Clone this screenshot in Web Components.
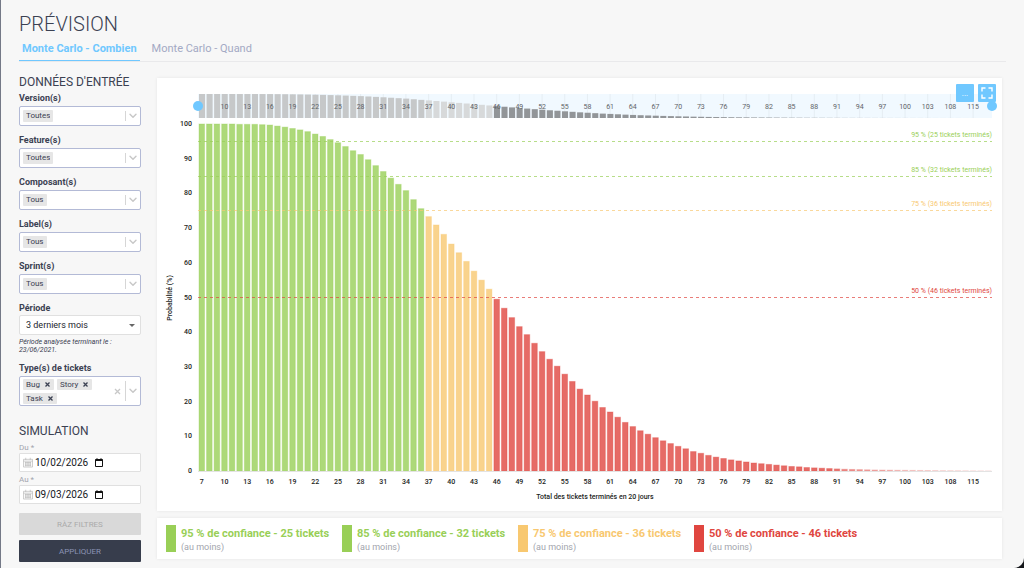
<!DOCTYPE html>
<html lang="fr">
<head>
<meta charset="utf-8">
<meta name="viewport" content="width=device-width, initial-scale=1">
<title>Prévision</title>
<style>
    :root {
        --ink: #3b4152;
        --muted: #a2a5ad;
        --lavender: #b3bad6;
        --blue: #70c8ff;
        --green: #99cf57;
        --orange: #f8c870;
        --red: #e04640;
    }

    body {
        margin: 0;
        background: #15171b;
        color: var(--ink);
        font-family: Roboto, "Liberation Sans", sans-serif;
        font-size: 8px;
    }
</style>
</head>
<body>
<forecast-page>
    <page-tabs slot="tabs"></page-tabs>

    <filter-group slot="filters" heading="DONNÉES D'ENTRÉE">
        <filter-select label="Version(s)" value="Toutes"></filter-select>
        <filter-select label="Feature(s)" value="Toutes"></filter-select>
        <filter-select label="Composant(s)" value="Tous"></filter-select>
        <filter-select label="Label(s)" value="Tous"></filter-select>
        <filter-select label="Sprint(s)" value="Tous"></filter-select>
        <period-select label="Période" value="3 derniers mois">Période analysée terminant le : 23/06/2021.</period-select>
        <chip-select label="Type(s) de tickets" values="Bug,Story,Task"></chip-select>
    </filter-group>
    <filter-group slot="filters" heading="SIMULATION">
        <date-field label="Du *" value="10/02/2026"></date-field>
        <date-field label="Au *" value="09/03/2026"></date-field>
    </filter-group>
    <form-actions slot="filters"></form-actions>

    <monte-carlo-chart></monte-carlo-chart>
    <confidence-legend>
        <confidence-item style="--tone: var(--green)" percent="95" tickets="25"></confidence-item>
        <confidence-item style="--tone: var(--green)" percent="85" tickets="32"></confidence-item>
        <confidence-item style="--tone: var(--orange)" percent="75" tickets="36"></confidence-item>
        <confidence-item style="--tone: var(--red)" percent="50" tickets="46"></confidence-item>
    </confidence-legend>
</forecast-page>

<script>
const BASE = `
    * { box-sizing: border-box; }
    button, input, select { font-family: inherit; color: inherit; margin: 0; }
    svg { display: block; }
`;

const FIELD = `
    :host { display: block; margin-bottom: 7px; }
    label {
        display: block;
        font-size: 9px;
        font-weight: 700;
        line-height: 14px;
        margin-bottom: 1px;
    }
    .box {
        display: flex;
        align-items: center;
        min-height: 20px;
        padding: 0 3px;
        background: #fff;
        border: 1px solid var(--lavender);
        border-radius: 2px;
    }
    .chevron {
        display: flex;
        align-items: center;
        align-self: stretch;
        margin: 4px 0;
        padding-left: 3px;
        border-left: 1px solid #d6d6d6;
    }
`;

const CHEVRON = `<span class="chevron"><svg width="8" height="6" viewBox="0 0 8 6" fill="none" stroke="#c8c8c8" stroke-width="1.4" stroke-linecap="round" stroke-linejoin="round"><path d="M1 1.2 4 4.3 7 1.2"/></svg></span>`;

class ForecastPage extends HTMLElement {
    connectedCallback() {
        this.attachShadow({ mode: 'open' }).innerHTML = `
            <style>
                ${BASE}
                :host {
                    display: block;
                    min-height: 100vh;
                    box-sizing: border-box;
                    padding: 11px 18px 6px;
                    background: #f7f7f7;
                    border-left: 1px solid #747987;
                    border-radius: 0 0 10px 0;
                }
                h1 {
                    margin: 0;
                    font-size: 20px;
                    font-weight: 300;
                    line-height: 26px;
                }
                .layout {
                    display: grid;
                    grid-template-columns: 122px minmax(0, 1fr);
                    gap: 16px;
                    padding-right: 4px;
                }
                aside { padding-top: 12px; }
                main {
                    display: flex;
                    flex-direction: column;
                    gap: 7px;
                    padding-top: 16px;
                }
            </style>
            <header>
                <h1>PRÉVISION</h1>
                <slot name="tabs"></slot>
            </header>
            <div class="layout">
                <aside><slot name="filters"></slot></aside>
                <main><slot></slot></main>
            </div>
        `;
    }
}

class PageTabs extends HTMLElement {
    connectedCallback() {
        this.attachShadow({ mode: 'open' }).innerHTML = `
            <style>
                ${BASE}
                :host { display: block; }
                nav {
                    display: flex;
                    gap: 9px;
                    border-bottom: 1px solid #e9e9eb;
                }
                a {
                    padding: 0 3px;
                    font-size: 11px;
                    line-height: 23px;
                    color: #a3a9c4;
                    text-decoration: none;
                    border-bottom: 1px solid transparent;
                }
                a[aria-current] {
                    color: var(--blue);
                    font-weight: 700;
                    border-color: var(--blue);
                }
            </style>
            <nav>
                <a href="#combien" aria-current="page">Monte Carlo - Combien</a>
                <a href="#quand">Monte Carlo - Quand</a>
            </nav>
        `;
    }
}

class FilterGroup extends HTMLElement {
    connectedCallback() {
        this.attachShadow({ mode: 'open' }).innerHTML = `
            <style>
                :host { display: block; }
                :host(:not(:first-of-type)) { margin-top: 17px; }
                h2 {
                    margin: 0;
                    font-size: 12px;
                    font-weight: 400;
                    line-height: 17px;
                }
            </style>
            <h2>${this.getAttribute('heading')}</h2>
            <slot></slot>
        `;
    }
}

class FilterSelect extends HTMLElement {
    connectedCallback() {
        this.attachShadow({ mode: 'open' }).innerHTML = `
            <style>
                ${BASE}
                ${FIELD}
                select {
                    appearance: none;
                    field-sizing: content;
                    height: 12px;
                    margin-right: auto;
                    padding: 0 3px;
                    background: #e6e6e6;
                    border: 0;
                    border-radius: 1px;
                    font-size: 8px;
                    line-height: 12px;
                }
            </style>
            <label for="control">${this.getAttribute('label')}</label>
            <div class="box">
                <select id="control"><option>${this.getAttribute('value')}</option></select>
                ${CHEVRON}
            </div>
        `;
    }
}

class PeriodSelect extends HTMLElement {
    connectedCallback() {
        this.attachShadow({ mode: 'open' }).innerHTML = `
            <style>
                ${BASE}
                ${FIELD}
                label { margin-bottom: 0; }
                .box {
                    padding: 0 5px 0 6px;
                    border-color: #e0e0e0;
                }
                select {
                    appearance: none;
                    flex: 1;
                    min-width: 0;
                    padding: 0;
                    background: none;
                    border: 0;
                    font-size: 9px;
                    color: #22252d;
                }
                p {
                    margin: 3px 20px 0 0;
                    font-size: 7px;
                    font-style: italic;
                    line-height: 8px;
                }
            </style>
            <label for="control">${this.getAttribute('label')}</label>
            <div class="box">
                <select id="control" aria-describedby="hint"><option>${this.getAttribute('value')}</option></select>
                <svg width="6" height="3" viewBox="0 0 6 3"><path d="M0 0h6L3 3z" fill="#666"/></svg>
            </div>
            <p id="hint"><slot></slot></p>
        `;
    }
}

class ChipSelect extends HTMLElement {
    connectedCallback() {
        const chips = this.getAttribute('values').split(',').map((value) => `
            <span class="chip">${value}<button type="button" aria-label="Retirer ${value}">
                <svg width="5" height="5" viewBox="0 0 5 5" stroke="currentColor" stroke-width="1.3"><path d="M.5.5l4 4M4.5.5l-4 4"/></svg>
            </button></span>
        `).join('');

        this.attachShadow({ mode: 'open' }).innerHTML = `
            <style>
                ${BASE}
                ${FIELD}
                .chips {
                    display: flex;
                    flex: 1;
                    flex-wrap: wrap;
                    gap: 3px;
                    padding: 2px 0 1px;
                }
                .chip {
                    display: flex;
                    align-items: center;
                    gap: 5px;
                    height: 11px;
                    padding: 0 4px 0 3px;
                    background: #e6e6e6;
                    border-radius: 1px;
                    font-size: 8px;
                }
                button {
                    padding: 0;
                    background: none;
                    border: 0;
                }
                input {
                    width: 12px;
                    height: 11px;
                    padding: 0;
                    border: 0;
                    outline: 0;
                }
                .clear { margin: 0 4px; color: #c8c8c8; }
            </style>
            <label for="control">${this.getAttribute('label')}</label>
            <div class="box">
                <div class="chips">${chips}<input id="control" type="text"></div>
                <button class="clear" type="button" aria-label="Tout effacer">
                    <svg width="7" height="7" viewBox="0 0 7 7" stroke="currentColor" stroke-width="1.3"><path d="M1 1l5 5M6 1 1 6"/></svg>
                </button>
                ${CHEVRON}
            </div>
        `;
        this.shadowRoot.querySelectorAll('.chip button').forEach((button) => {
            button.addEventListener('click', () => button.parentElement.remove());
        });
    }
}

class DateField extends HTMLElement {
    connectedCallback() {
        this.attachShadow({ mode: 'open' }).innerHTML = `
            <style>
                ${BASE}
                :host { display: block; margin-bottom: 3px; }
                :host(:first-of-type) { margin-top: 3px; }
                label {
                    display: block;
                    font-size: 8px;
                    line-height: 10px;
                    color: var(--muted);
                }
                .box {
                    display: flex;
                    align-items: center;
                    gap: 2px;
                    height: 19px;
                    padding: 0 3px;
                    background: #fff;
                    border: 1px solid #e0e0e0;
                    border-radius: 1px;
                }
                input {
                    width: 58px;
                    padding: 0;
                    border: 0;
                    background: none;
                    font-size: 10px;
                    color: #16181d;
                }
                button {
                    padding: 0;
                    background: none;
                    border: 0;
                    color: #111;
                }
            </style>
            <label for="control">${this.getAttribute('label')}</label>
            <div class="box">
                <svg width="10" height="11" viewBox="0 0 11 11" fill="none" stroke="#bcbcbc" stroke-width=".8">
                    <path d="M.5 2h10v8.5H.5zM.5 4h10M3 .3v2.4M8 .3v2.4M2 5.5h7M2 7.2h7M2 9h7M3 4.7v5M5.5 4.7v5M8 4.7v5"/>
                </svg>
                <input id="control" type="text" inputmode="numeric" value="${this.getAttribute('value')}">
                <button type="button" aria-label="Ouvrir le calendrier">
                    <svg width="8" height="9" viewBox="0 0 8 9" fill="none" stroke="currentColor"><path d="M.5 1.5h7v7h-7zM2 .2v1.5M6 .2v1.5"/><path d="M.5 2.2h7" stroke-width="1.6"/></svg>
                </button>
            </div>
        `;
    }
}

class FormActions extends HTMLElement {
    connectedCallback() {
        this.attachShadow({ mode: 'open' }).innerHTML = `
            <style>
                ${BASE}
                :host {
                    display: grid;
                    gap: 5px;
                    margin-top: 9px;
                }
                button {
                    height: 22px;
                    padding: 0;
                    border: 0;
                    border-radius: 1px;
                    font-size: 8px;
                }
                .reset { background: #d9d9d9; color: #aaa; }
                .apply { background: #373d4c; color: #8b93b4; }
            </style>
            <button class="reset" type="reset">RÀZ FILTRES</button>
            <button class="apply" type="submit">APPLIQUER</button>
        `;
    }
}

// Probability (%) of finishing at least N tickets, one value per column
const PROBABILITIES = [
    100, 100, 100, 100, 100, 99.9, 99.9, 99.9, 99.8, 99.7,
    99.4, 99.1, 98.7, 98.3, 97.8, 97.1, 96.4, 95.5, 94.6, 93.5,
    92.3, 91.2, 89.7, 88, 86.3, 84.4, 82.6, 80.8, 78.2, 75.6,
    73.3, 70.9, 68.2, 65.4, 62.9, 60.4, 57.6, 55, 52.4, 49.5,
    46.9, 44.2, 41.6, 39.3, 36.8, 34.4, 32.2, 30.2, 27.9, 25.8,
    23.6, 21.9, 20.1, 18.3, 17, 15.5, 14, 12.8, 11.6, 10.6,
    9.6, 8.7, 7.9, 7.1, 6.4, 5.6, 5.1, 4.5, 4, 3.6,
    3.2, 2.9, 2.6, 2.3, 2.1, 1.9, 1.7, 1.5, 1.3, 1.2,
    1, .9, .8, .7, .6, .5, .45, .4, .35, .3,
    .28, .25, .22, .2, .18, .16, .14, .12, .1, .09,
    .08, .06, .05, .04, .03
];

// The axis skips the totals that no simulation reached after 103
const LABELS = [];
for (let i = 0; i <= 96; i += 3) LABELS.push([i, i + 7]);
LABELS.push([99, 108], [102, 115]);

const THRESHOLDS = [
    [95, 25, 'var(--green)'],
    [85, 32, 'var(--green)'],
    [75, 36, 'var(--orange)'],
    [50, 46, 'var(--red)']
];

class MonteCarloChart extends HTMLElement {
    connectedCallback() {
        this.attachShadow({ mode: 'open' });
        this.render();
    }

    render() {
        const left = 41, right = 835, top = 46, bottom = 393;
        const step = (right - left) / PROBABILITIES.length;
        const x = (i) => left + step * i;
        const y = (p) => bottom - (bottom - top) * p / 100;
        const tone = (i, tones) => tones[i < 30 ? 0 : i < 39 ? 1 : 2];

        const columns = PROBABILITIES.map((p, i) => {
            const color = tone(i, ['var(--green)', 'var(--orange)', 'var(--red)']);
            // columns under 1 % fade out towards the axis
            const fade = Math.min(1, 0.3 + p);
            return `<rect x="${x(i) + 1}" y="${y(p)}" width="${step - 2}" height="${bottom - y(p)}" opacity="${fade}" style="fill:${color};stroke:${color}"/>`;
        }).join('');

        const overview = PROBABILITIES.map((p, i) => {
            const h = 24 * p / 100;
            return `<rect x="${x(i) + 1}" y="${40 - h}" width="${step - 1.5}" height="${h}" fill="${tone(i, ['#c6c8c9', '#d7d9da', '#929598'])}"/>`;
        }).join('');

        const centered = ([i, text], at) => `<text x="${x(i) + step / 2}" y="${at}" text-anchor="middle">${text}</text>`;

        const thresholds = THRESHOLDS.map(([p, tickets, color]) => `
            <path d="M${left} ${Math.floor(y(p)) + .5}H${right}" style="stroke:${color}"/>
            <text x="${right}" y="${Math.floor(y(p)) - 4}" text-anchor="end" style="fill:${color}">${p} % (${tickets} tickets terminés)</text>
        `).join('');

        let scale = '';
        for (let p = 0; p <= 100; p += 10) {
            scale += `<text x="35" y="${Math.round(y(p)) + 2}" text-anchor="end">${p}</text>`;
        }

        this.shadowRoot.innerHTML = `
            <style>
                ${BASE}
                :host {
                    display: block;
                    position: relative;
                    background: #fff;
                    box-shadow: 0 0 3px rgba(0, 0, 0, 0.08);
                }
                svg { width: 100%; height: auto; }
                text { font-size: 7px; }
                .columns { fill-opacity: 0.8; stroke-opacity: 0.35; }
                .thresholds path {
                    stroke-width: 1;
                    stroke-dasharray: 3 3;
                    stroke-opacity: 0.7;
                }
                .axis { fill: #1c1e22; font-weight: 500; }
                .overview text { fill: #5f6468; }
                .tools {
                    position: absolute;
                    top: 6px;
                    right: 6px;
                    display: flex;
                    gap: 4px;
                }
                .tools button {
                    display: grid;
                    place-items: center;
                    width: 18px;
                    height: 18px;
                    padding: 0;
                    background: var(--blue);
                    border: 0;
                    border-radius: 1px;
                    color: #fff;
                    font-size: 8px;
                }
                .tools svg { width: 12px; height: 12px; }
            </style>
            <svg viewBox="0 0 845 433" role="img" aria-label="Probabilité par total de tickets terminés">
                <g class="overview">
                    <rect x="${left}" y="16" width="${right - left}" height="24" fill="#f1f9ff"/>
                    ${LABELS.map(([i]) => `<path d="M${x(i) + step / 2} 16v24" stroke="#e5edf3"/>`).join('')}
                    ${overview}
                    ${LABELS.slice(1).map((label) => centered(label, 31)).join('')}
                    <circle cx="${left}" cy="28" r="5" style="fill:var(--blue)"/>
                    <circle cx="${right}" cy="28" r="5" style="fill:var(--blue)"/>
                </g>
                <g class="columns">${columns}</g>
                <path d="M${left} 393.5H${right}" stroke="#e3e3e3"/>
                <g class="thresholds">${thresholds}</g>
                <g class="axis">
                    ${scale}
                    ${LABELS.map((label) => centered(label, 406)).join('')}
                    <text x="438" y="421" text-anchor="middle">Total des tickets terminés en 20 jours</text>
                    <text transform="translate(15 220) rotate(-90)" text-anchor="middle">Probabilité (%)</text>
                </g>
            </svg>
            <div class="tools">
                <button type="button" aria-label="Exporter">...</button>
                <button type="button" aria-label="Plein écran">
                    <svg viewBox="0 0 12 12" fill="none" stroke="currentColor" stroke-width="1.4"><path d="M1 4.500V1h3.500M7.500 1H11v3.500M11 7.500V11H7.500M4.500 11H1V7.500"/></svg>
                </button>
            </div>
        `;
    }
}

class ConfidenceLegend extends HTMLElement {
    connectedCallback() {
        this.attachShadow({ mode: 'open' }).innerHTML = `
            <style>
                :host {
                    display: grid;
                    grid-template-columns: repeat(4, 176px);
                    padding: 7px 9px;
                    background: #fff;
                    box-shadow: 0 0 3px rgba(0, 0, 0, 0.08);
                }
            </style>
            <slot></slot>
        `;
    }
}

class ConfidenceItem extends HTMLElement {
    connectedCallback() {
        this.attachShadow({ mode: 'open' }).innerHTML = `
            <style>
                :host {
                    display: flex;
                    gap: 5px;
                    white-space: nowrap;
                }
                .swatch {
                    width: 10px;
                    background: var(--tone);
                }
                strong {
                    display: block;
                    font-size: 11px;
                    line-height: 18px;
                    color: var(--tone);
                }
                small {
                    display: block;
                    font-size: 9px;
                    line-height: 9px;
                    color: var(--muted);
                }
            </style>
            <span class="swatch"></span>
            <div>
                <strong>${this.getAttribute('percent')} % de confiance - ${this.getAttribute('tickets')} tickets</strong>
                <small>(au moins)</small>
            </div>
        `;
    }
}

customElements.define('forecast-page', ForecastPage);
customElements.define('page-tabs', PageTabs);
customElements.define('filter-group', FilterGroup);
customElements.define('filter-select', FilterSelect);
customElements.define('period-select', PeriodSelect);
customElements.define('chip-select', ChipSelect);
customElements.define('date-field', DateField);
customElements.define('form-actions', FormActions);
customElements.define('monte-carlo-chart', MonteCarloChart);
customElements.define('confidence-legend', ConfidenceLegend);
customElements.define('confidence-item', ConfidenceItem);
</script>
</body>
</html>
